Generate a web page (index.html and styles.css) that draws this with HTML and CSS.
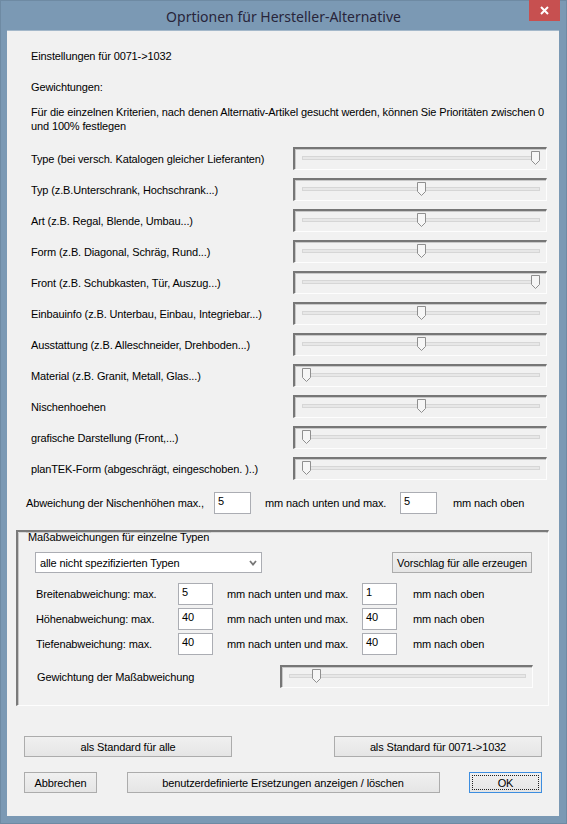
FILE: index.html
```html
<!DOCTYPE html>
<html lang="de">
<head>
<meta charset="utf-8">
<title>Oprtionen für Hersteller-Alternative</title>
<link rel="stylesheet" href="styles.css">
</head>
<body>
<div class="window">
  <div class="titlebar">
    <span class="title">Oprtionen für Hersteller-Alternative</span>
    <div class="close"><svg width="9" height="9" viewBox="0 0 9 9"><path d="M1 1 L8 8 M8 1 L1 8" stroke="#fff" stroke-width="2"/></svg></div>
  </div>
  <div class="client">
    <div class="line first">Einstellungen für 0071-&gt;1032</div>
    <div class="line second">Gewichtungen:</div>
    <div class="para">Für die einzelnen Kriterien, nach denen Alternativ-Artikel gesucht werden, können Sie Prioritäten zwischen 0 und 100% festlegen</div>

    <div class="weights">
      <div class="wrow"><span class="wlabel">Type (bei versch. Katalogen gleicher Lieferanten)</span><div class="slider" style="--v:100"><div class="track"></div><svg class="thumb" width="9" height="14" viewBox="0 0 9 14"><path d="M0.5 0.5 H8.5 V9.5 L4.5 13.5 L0.5 9.5 Z"/></svg></div></div>
      <div class="wrow"><span class="wlabel">Typ (z.B.Unterschrank, Hochschrank...)</span><div class="slider" style="--v:50"><div class="track"></div><svg class="thumb" width="9" height="14" viewBox="0 0 9 14"><path d="M0.5 0.5 H8.5 V9.5 L4.5 13.5 L0.5 9.5 Z"/></svg></div></div>
      <div class="wrow"><span class="wlabel">Art (z.B. Regal, Blende, Umbau...)</span><div class="slider" style="--v:50"><div class="track"></div><svg class="thumb" width="9" height="14" viewBox="0 0 9 14"><path d="M0.5 0.5 H8.5 V9.5 L4.5 13.5 L0.5 9.5 Z"/></svg></div></div>
      <div class="wrow"><span class="wlabel">Form (z.B. Diagonal, Schräg, Rund...)</span><div class="slider" style="--v:50"><div class="track"></div><svg class="thumb" width="9" height="14" viewBox="0 0 9 14"><path d="M0.5 0.5 H8.5 V9.5 L4.5 13.5 L0.5 9.5 Z"/></svg></div></div>
      <div class="wrow"><span class="wlabel">Front (z.B. Schubkasten, Tür, Auszug...)</span><div class="slider" style="--v:100"><div class="track"></div><svg class="thumb" width="9" height="14" viewBox="0 0 9 14"><path d="M0.5 0.5 H8.5 V9.5 L4.5 13.5 L0.5 9.5 Z"/></svg></div></div>
      <div class="wrow"><span class="wlabel">Einbauinfo (z.B. Unterbau, Einbau, Integriebar...)</span><div class="slider" style="--v:50"><div class="track"></div><svg class="thumb" width="9" height="14" viewBox="0 0 9 14"><path d="M0.5 0.5 H8.5 V9.5 L4.5 13.5 L0.5 9.5 Z"/></svg></div></div>
      <div class="wrow"><span class="wlabel">Ausstattung (z.B. Alleschneider, Drehboden...)</span><div class="slider" style="--v:50"><div class="track"></div><svg class="thumb" width="9" height="14" viewBox="0 0 9 14"><path d="M0.5 0.5 H8.5 V9.5 L4.5 13.5 L0.5 9.5 Z"/></svg></div></div>
      <div class="wrow"><span class="wlabel">Material (z.B. Granit, Metall, Glas...)</span><div class="slider" style="--v:0"><div class="track"></div><svg class="thumb" width="9" height="14" viewBox="0 0 9 14"><path d="M0.5 0.5 H8.5 V9.5 L4.5 13.5 L0.5 9.5 Z"/></svg></div></div>
      <div class="wrow"><span class="wlabel">Nischenhoehen</span><div class="slider" style="--v:50"><div class="track"></div><svg class="thumb" width="9" height="14" viewBox="0 0 9 14"><path d="M0.5 0.5 H8.5 V9.5 L4.5 13.5 L0.5 9.5 Z"/></svg></div></div>
      <div class="wrow"><span class="wlabel">grafische Darstellung (Front,...)</span><div class="slider" style="--v:0"><div class="track"></div><svg class="thumb" width="9" height="14" viewBox="0 0 9 14"><path d="M0.5 0.5 H8.5 V9.5 L4.5 13.5 L0.5 9.5 Z"/></svg></div></div>
      <div class="wrow"><span class="wlabel">planTEK-Form (abgeschrägt, eingeschoben. )..)</span><div class="slider" style="--v:0"><div class="track"></div><svg class="thumb" width="9" height="14" viewBox="0 0 9 14"><path d="M0.5 0.5 H8.5 V9.5 L4.5 13.5 L0.5 9.5 Z"/></svg></div></div>
    </div>

    <div class="niche">
      <span>Abweichung der Nischenhöhen max.,</span>
      <div class="field">5</div>
      <span class="after">mm nach unten und max.</span>
      <div class="field">5</div>
      <span class="after2">mm nach oben</span>
    </div>

    <div class="group">
      <div class="legend"><span class="legend-text">Maßabweichungen für einzelne Typen</span></div>
      <div class="toprow">
        <div class="combo"><span>alle nicht spezifizierten Typen</span><svg width="8" height="6" viewBox="0 0 8 6"><path d="M1 1 L4 4.5 L7 1" fill="none" stroke="#777" stroke-width="1.8"/></svg></div>
        <div class="btn suggest">Vorschlag für alle erzeugen</div>
      </div>
      <div class="dims">
        <div class="drow"><span>Breitenabweichung: max.</span><div class="field small">5</div><span class="after">mm nach unten und max.</span><div class="field small">1</div><span class="after2">mm nach oben</span></div>
        <div class="drow"><span>Höhenabweichung: max.</span><div class="field small">40</div><span class="after">mm nach unten und max.</span><div class="field small">40</div><span class="after2">mm nach oben</span></div>
        <div class="drow"><span>Tiefenabweichung: max.</span><div class="field small">40</div><span class="after">mm nach unten und max.</span><div class="field small">40</div><span class="after2">mm nach oben</span></div>
      </div>
      <div class="grow">
        <span>Gewichtung der Maßabweichung</span>
        <div class="slider narrow" style="--v:10"><div class="track"></div><svg class="thumb" width="9" height="14" viewBox="0 0 9 14"><path d="M0.5 0.5 H8.5 V9.5 L4.5 13.5 L0.5 9.5 Z"/></svg></div>
      </div>
    </div>

    <div class="brow one">
      <div class="btn wide">als Standard für alle</div>
      <div class="btn wide">als Standard für 0071-&gt;1032</div>
    </div>
    <div class="brow two">
      <div class="btn short">Abbrechen</div>
      <div class="btn long">benutzerdefinierte Ersetzungen anzeigen / löschen</div>
      <div class="btn short ok"><span>OK</span></div>
    </div>
  </div>
</div>
</body>
</html>
```

FILE: styles.css
```css
html, body {
  margin: 0;
  padding: 0;
}
body {
  width: 567px;
  height: 824px;
  overflow: hidden;
  font-family: "Liberation Sans", Arial, sans-serif;
  font-size: 11px;
  letter-spacing: -0.13px;
  color: #000;
}
.window {
  width: 567px;
  height: 824px;
  background: #7b99b4;
  display: flex;
  flex-direction: column;
  box-sizing: border-box;
  border: 1px solid #6e8aa3;
}
.titlebar {
  height: 29px;
  position: relative;
  display: flex;
  justify-content: center;
  align-items: center;
  flex: none;
}
.title {
  font-family: "Noto Sans", "Open Sans", sans-serif;
  font-size: 14px;
  letter-spacing: 0;
  color: #28253a;
  margin-top: 1px;
}
.close {
  position: absolute;
  top: -1px;
  right: 6px;
  width: 31px;
  height: 21px;
  background: #c75050;
  display: flex;
  align-items: center;
  justify-content: center;
}
.client {
  flex: 1;
  margin: 0 7px 7px 6px;
  background: #f1f1f1;
  border-top: 1px solid #a4b8ca;
  display: flex;
  flex-direction: column;
}
.line {
  line-height: 15px;
  padding-left: 24px;
}
.first { margin-top: 18px; }
.second { margin-top: 16px; }
.para {
  margin-top: 10px;
  padding-left: 24px;
  padding-right: 6px;
  line-height: 14px;
}
.weights {
  margin-top: 14px;
  display: flex;
  flex-direction: column;
  gap: 8px;
  padding-left: 24px;
}
.wrow {
  display: flex;
  align-items: center;
  height: 23px;
}
.wlabel {
  width: 262px;
}
.slider {
  position: relative;
  width: 254px;
  height: 23px;
  box-sizing: border-box;
  border-top: 2px solid #767676;
  border-left: 2px solid #767676;
  border-right: 1px solid #fdfdfd;
  border-bottom: 1px solid #fdfdfd;
  box-shadow: inset 1px 1px 0 #c8c8c8;
}
.slider.narrow { width: 253px; }
.track {
  position: absolute;
  left: 7px;
  right: 6px;
  top: 7px;
  height: 4px;
  box-sizing: border-box;
  background: #e7e7e7;
  border: 1px solid #d6d6d6;
}
.thumb {
  position: absolute;
  top: 2px;
  left: calc(7px + var(--v) * 2.29px);
}
.thumb path {
  fill: #f6f6f6;
  stroke: #8f8f8f;
  stroke-width: 1;
}
.niche {
  margin-top: 12px;
  padding-left: 19px;
  display: grid;
  grid-template-columns: 188px 37px 149px 37px auto;
  align-items: center;
  height: 22px;
}
.after { padding-left: 14px; }
.after2 { padding-left: 16px; }
.field {
  height: 22px;
  box-sizing: border-box;
  background: #fff;
  border: 1px solid #abadb3;
  padding: 1px 3px;
  line-height: 14px;
}
.group {
  margin: 16px 0 0 9px;
  width: 533px;
  height: 176px;
  box-sizing: border-box;
  border-top: 2px solid #7a7a7a;
  border-left: 2px solid #7a7a7a;
  border-right: 1px solid #fdfdfd;
  border-bottom: 1px solid #fdfdfd;
  box-shadow: inset 1px 1px 0 #c6c6c6;
  display: flex;
  flex-direction: column;
}
.legend {
  display: flex;
  height: 11px;
}
.legend::before, .legend::after {
  content: "";
  border-top: 1px solid #d8d8d8;
  margin-top: 0;
}
.legend::before { width: 8px; }
.legend::after { flex: 1; margin-right: 2px; }
.legend-text {
  line-height: 12px;
  margin-top: -1px;
  padding: 0 2px;
}
.toprow {
  margin-top: 9px;
  display: flex;
  align-items: center;
  padding-left: 17px;
  padding-right: 16px;
  height: 21px;
}
.combo {
  width: 227px;
  height: 21px;
  box-sizing: border-box;
  background: #fff;
  border: 1px solid #abadb3;
  display: flex;
  align-items: center;
  justify-content: space-between;
  padding: 0 4px 0 4px;
}
.combo svg { margin-top: 1px; }
.btn {
  box-sizing: border-box;
  height: 21px;
  border: 1px solid #acacac;
  background: linear-gradient(#f0f0f0, #e5e5e5);
  display: flex;
  align-items: center;
  justify-content: center;
  white-space: nowrap;
}
.suggest {
  margin-left: auto;
  width: 140px;
}
.dims {
  margin-top: 10px;
  display: flex;
  flex-direction: column;
  gap: 3px;
  padding-left: 18px;
}
.drow {
  display: grid;
  grid-template-columns: 142px 35px 149px 35px auto;
  align-items: center;
  height: 22px;
}
.grow {
  margin-top: 10px;
  display: flex;
  align-items: center;
  padding-left: 19px;
}
.grow > span { width: 243px; }
.brow {
  display: flex;
  justify-content: space-between;
  margin-left: 17px;
  margin-right: 17px;
}
.brow.one { margin-top: 30px; }
.brow.two { margin-top: 15px; }
.wide { width: 208px; }
.short { width: 73px; }
.long { width: 313px; }
.ok {
  border-color: #3d8ee0;
  padding: 2px;
}
.ok span {
  flex: 1;
  align-self: stretch;
  display: flex;
  align-items: center;
  justify-content: center;
  border: 1px dotted #222;
}
```
